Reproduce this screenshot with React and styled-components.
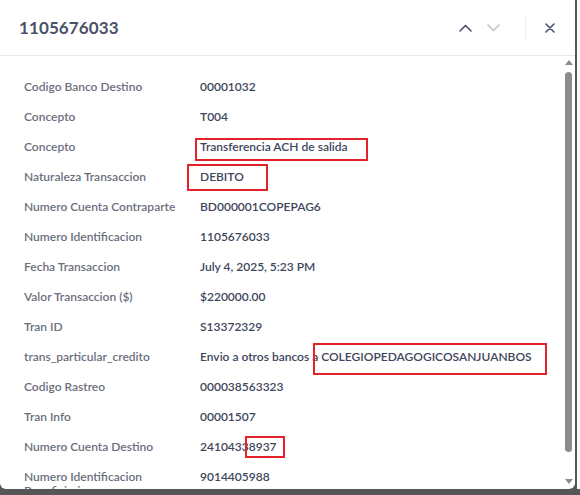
import React from "react";
import styled, { createGlobalStyle } from "styled-components";

const Global = createGlobalStyle`
  html, body { margin: 0; padding: 0; }
  body { background: #f4f5f7; font-family: Lato, "Open Sans", sans-serif; }
`;

const Frame = styled.div`
  width: 580px;
  height: 495px;
  display: flex;
  background: #565656;
  overflow: hidden;
`;

const Modal = styled.div`
  position: relative;
  width: 575px;
  height: 489px;
  background: #fff;
  border-radius: 0 0 6px 6px;
  display: flex;
  flex-direction: column;
  overflow: hidden;
  flex-shrink: 0;
`;

const Peek = styled.div`
  margin-left: 2px;
  width: 3px;
  height: 489px;
  background: #f7f8fa;
`;

const Header = styled.div`
  height: 55px;
  flex-shrink: 0;
  display: flex;
  align-items: center;
  padding: 0 11px 0 19px;
  border-bottom: 1px solid #e6e8ec;
`;

const Title = styled.h2`
  margin: 0;
  flex: 1;
  font-size: 17px;
  font-weight: 700;
  color: #4a5169;
  letter-spacing: 0.1px;
`;

const NavButton = styled.button`
  border: 0;
  background: none;
  padding: 0;
  width: 28px;
  height: 24px;
  display: flex;
  align-items: center;
  justify-content: center;
  color: ${(p) => (p.$disabled ? "#b9bdcb" : "#4a5169")};
`;

const Separator = styled.div`
  width: 1px;
  height: 24px;
  background: #eceef1;
  margin: 0 10px 0 18px;
`;

const Body = styled.div`
  flex: 1;
  overflow: hidden;
  padding: 16px 0 0 24px;
`;

const Row = styled.div`
  display: flex;
  align-items: flex-start;
  padding: 8px 0;
  line-height: 14px;
  font-size: 12px;
`;

const Label = styled.div`
  width: 170px;
  margin-right: 6px;
  color: #6b6f7d;
  font-weight: 600;
`;

const Value = styled.div`
  color: #3e465c;
  font-weight: 600;
  white-space: nowrap;
`;

const Mark = styled.div`
  position: absolute;
  border: 2px solid #e3222a;
  box-sizing: border-box;
  pointer-events: none;
`;

const ScrollTrack = styled.div`
  position: absolute;
  right: 2px;
  top: 58px;
  bottom: 2px;
  width: 9px;
  display: flex;
  flex-direction: column;
  align-items: center;
`;

const Arrow = styled.div`
  width: 0;
  height: 0;
  border-left: 4px solid transparent;
  border-right: 4px solid transparent;
  ${(p) =>
    p.$up
      ? "border-bottom: 5px solid #8c8c8c; margin-top: 2px;"
      : "border-top: 5px solid #8c8c8c; margin-top: auto; margin-bottom: 3px;"}
`;

const Thumb = styled.div`
  width: 7px;
  height: 380px;
  margin-top: 7px;
  border-radius: 4px;
  background: #8c8c8c;
`;

const rows = [
  ["Codigo Banco Destino", "00001032"],
  ["Concepto", "T004"],
  ["Concepto", "Transferencia ACH de salida"],
  ["Naturaleza Transaccion", "DEBITO"],
  ["Numero Cuenta Contraparte", "BD000001COPEPAG6"],
  ["Numero Identificacion", "1105676033"],
  ["Fecha Transaccion", "July 4, 2025, 5:23 PM"],
  ["Valor Transaccion ($)", "$220000.00"],
  ["Tran ID", "S13372329"],
  ["trans_particular_credito", "Envio a otros bancos a COLEGIOPEDAGOGICOSANJUANBOS"],
  ["Codigo Rastreo", "000038563323"],
  ["Tran Info", "00001507"],
  ["Numero Cuenta Destino", "24104338937"],
  ["Numero Identificacion Beneficiario", "9014405988"],
];

const marks = [
  { left: 195, top: 138, width: 173, height: 23 },
  { left: 187, top: 164, width: 81, height: 27 },
  { left: 313, top: 343, width: 234, height: 32 },
  { left: 245, top: 436, width: 40, height: 22 },
];

const ChevronUp = () => (
  <svg width="13" height="8" viewBox="0 0 13 8" fill="none" stroke="currentColor" strokeWidth="1.6" strokeLinecap="round" strokeLinejoin="round">
    <path d="M1 7 L6.5 1.5 L12 7" />
  </svg>
);
const ChevronDown = () => (
  <svg width="13" height="8" viewBox="0 0 13 8" fill="none" stroke="currentColor" strokeWidth="1.4" strokeLinecap="round" strokeLinejoin="round">
    <path d="M1 1 L6.5 6.5 L12 1" />
  </svg>
);
const Close = () => (
  <svg width="10" height="10" viewBox="0 0 10 10" fill="none" stroke="currentColor" strokeWidth="1.6" strokeLinecap="round">
    <path d="M1 1 L9 9 M9 1 L1 9" />
  </svg>
);

export default function App() {
  return (
    <>
      <Global />
      <Frame>
        <Modal>
          <Header>
            <Title>1105676033</Title>
            <NavButton><ChevronUp /></NavButton>
            <NavButton $disabled><ChevronDown /></NavButton>
            <Separator />
            <NavButton><Close /></NavButton>
          </Header>
          <Body>
            {rows.map(([l, v], i) => (
              <Row key={i}>
                <Label>{l}</Label>
                <Value>{v}</Value>
              </Row>
            ))}
          </Body>
          <ScrollTrack>
            <Arrow $up />
            <Thumb />
            <Arrow />
          </ScrollTrack>
          {marks.map((m, i) => (
            <Mark key={i} style={{ left: m.left, top: m.top, width: m.width, height: m.height }} />
          ))}
        </Modal>
        <Peek />
      </Frame>
    </>
  );
}
